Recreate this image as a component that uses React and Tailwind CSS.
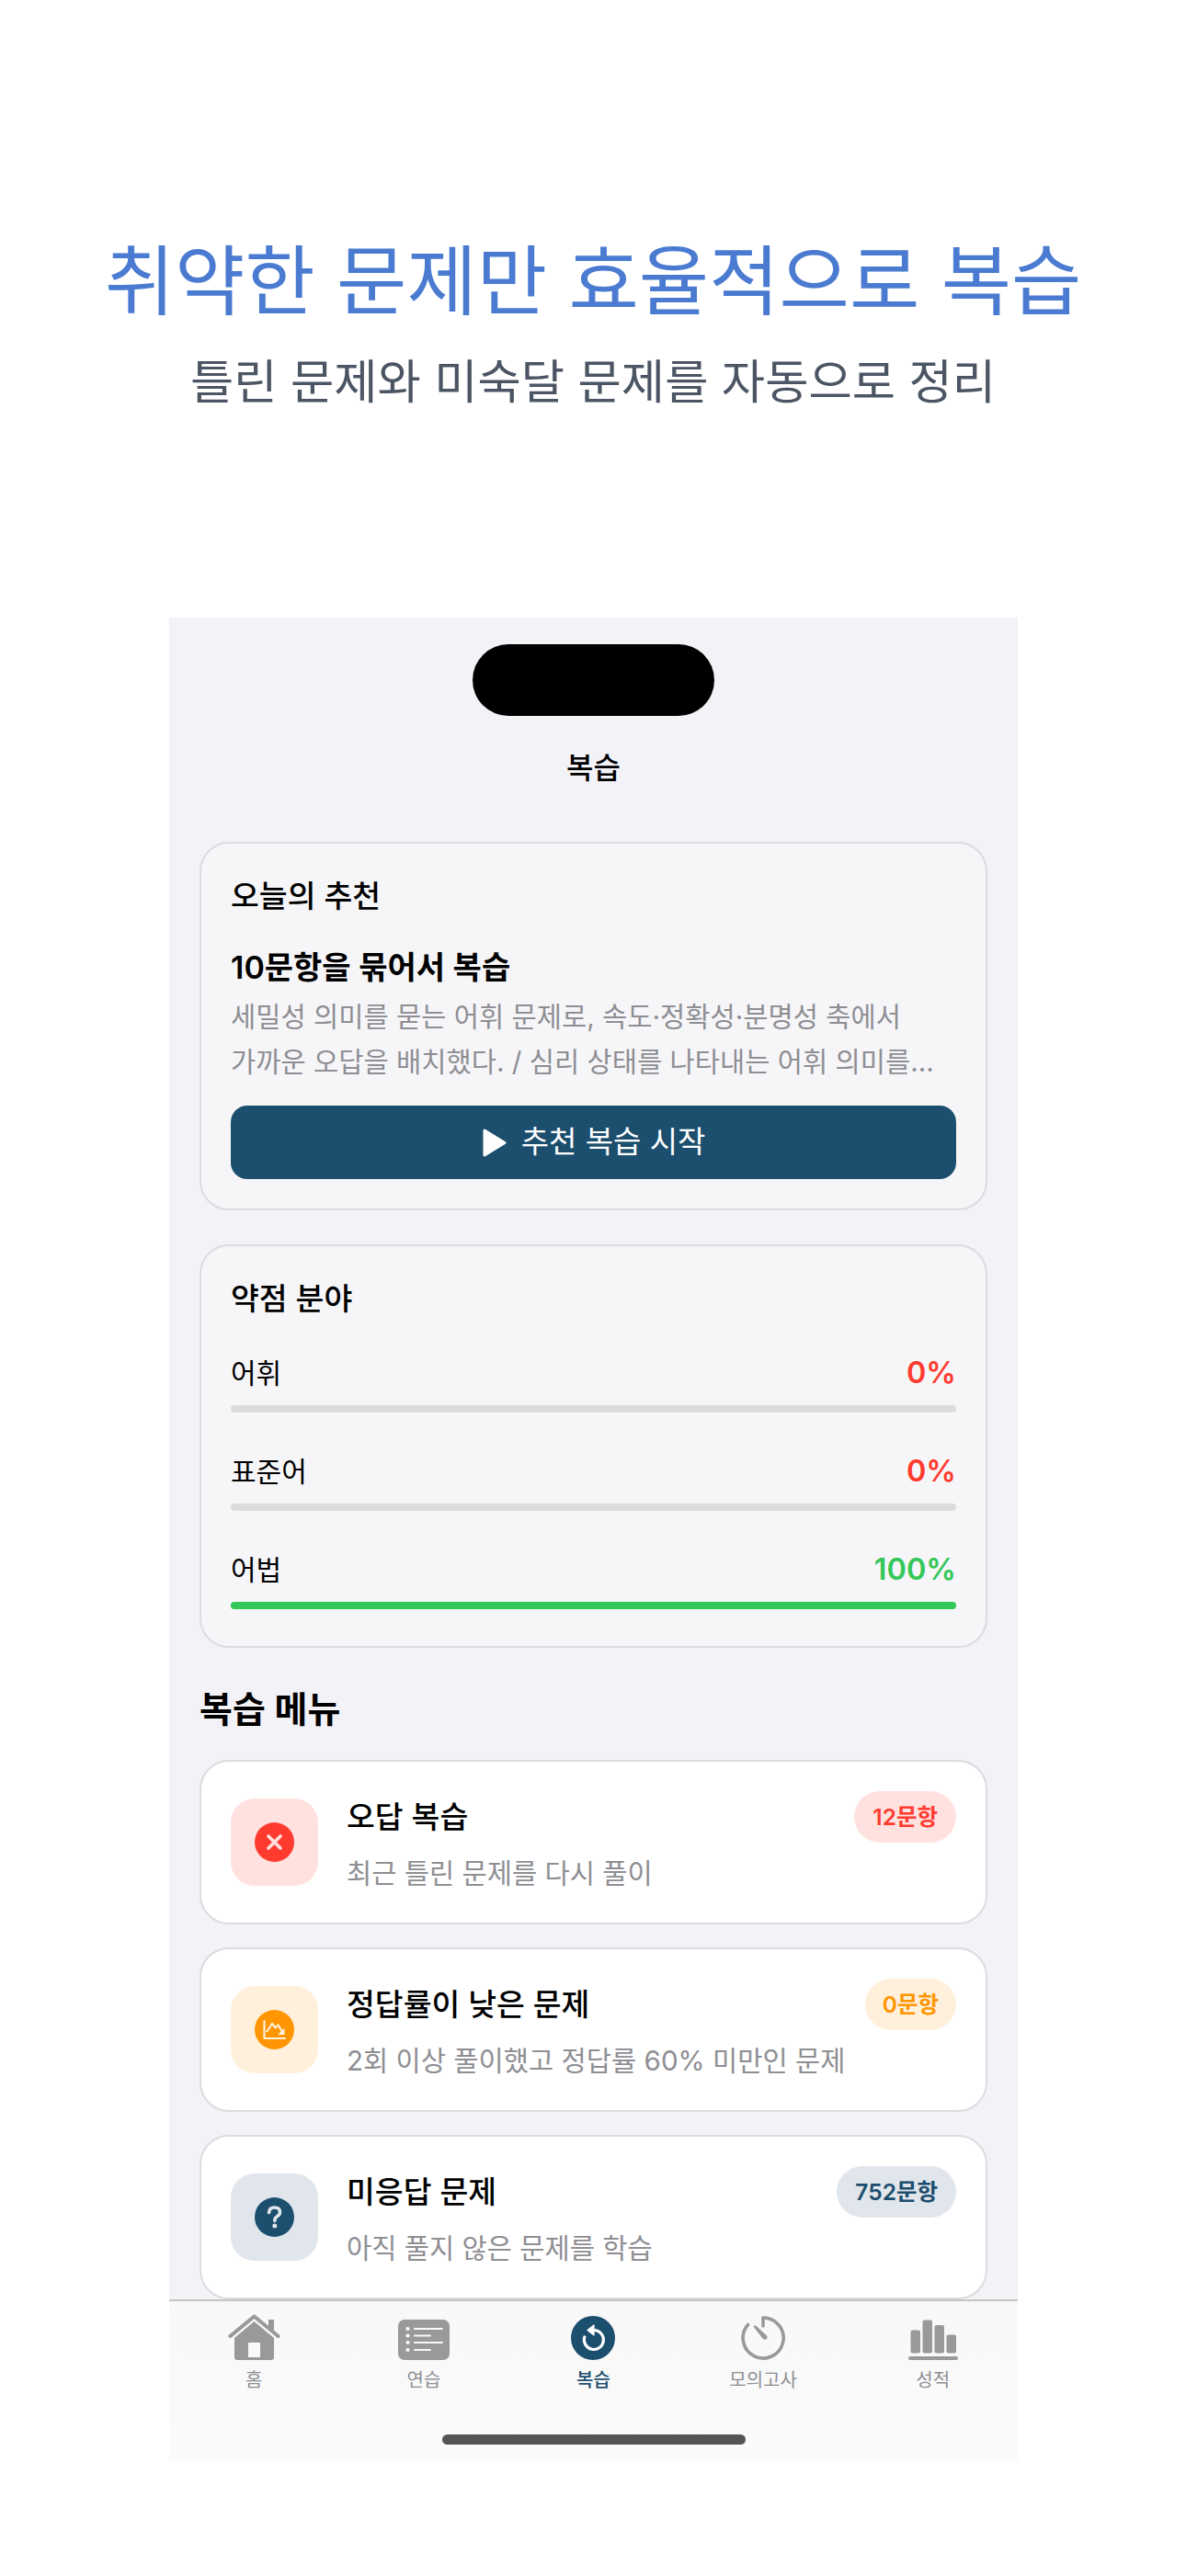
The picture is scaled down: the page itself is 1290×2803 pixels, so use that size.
const FONT = "font-['Inter','Noto_Sans_CJK_KR',sans-serif]"

const GRAY = '#999997'

function HomeIcon() {
  return (
    <svg width="57" height="50" viewBox="0 0 57 50">
      <path d="M2.5 24 L28.5 2.5 L54.5 24" fill="none" stroke={GRAY} strokeWidth="4" strokeLinecap="round" strokeLinejoin="round" />
      <rect x="44" y="6" width="6" height="12" fill={GRAY} />
      <path fillRule="evenodd" fill={GRAY} d="M28.5 8 L50 26 V47 Q50 50 47 50 H10 Q7 50 7 47 V26 Z M22 31 V47 H35 V31 Z" />
    </svg>
  )
}

function ListIcon() {
  return (
    <svg width="56" height="44" viewBox="0 0 56 44">
      <rect width="56" height="44" rx="7" fill={GRAY} />
      {[10, 17.5, 25, 33].map(y => <circle key={y} cx="10.5" cy={y} r="2.1" fill="#f9f9f9" />)}
      <g stroke="#f9f9f9" strokeWidth="2" strokeLinecap="round">
        <path d="M18 10 H48" />
        <path d="M18 17.5 H35" />
        <path d="M18 25 H48" />
        <path d="M18 33 H35" />
      </g>
    </svg>
  )
}

function ReviewIcon() {
  return (
    <svg width="48" height="48" viewBox="0 0 48 48">
      <circle cx="24" cy="24" r="24" fill="#1c4e6e" />
      <path d="M25 15.5 A10.5 10.5 0 1 1 14.8 23" fill="none" stroke="#fff" strokeWidth="3.2" strokeLinecap="round" />
      <path d="M25 10 V21 L18 15.5 Z" fill="#fff" stroke="#fff" strokeWidth="1.2" strokeLinejoin="round" />
    </svg>
  )
}

function TimerIcon() {
  return (
    <svg width="49" height="48" viewBox="0 0 49 48">
      <path d="M24 11 V2 A22 22 0 1 1 7.6 9.5" fill="none" stroke={GRAY} strokeWidth="3.6" strokeLinecap="round" strokeLinejoin="round" />
      <path d="M13.5 11.5 L15.5 10 L28 21.5 Q29.5 24 27.5 25.5 Q25 26.5 23.5 24.5 Z" fill={GRAY} />
    </svg>
  )
}

function StatsIcon() {
  return (
    <svg width="54" height="44" viewBox="0 0 54 44">
      <g fill={GRAY}>
        <rect x="2.5" y="11.5" width="10.5" height="25" rx="2" />
        <rect x="15.5" y="0.5" width="10.5" height="36" rx="2" />
        <rect x="28.5" y="6" width="10.5" height="30.5" rx="2" />
        <rect x="41.5" y="16.5" width="10.5" height="20" rx="2" />
        <rect x="0" y="40" width="54" height="4" rx="2" />
      </g>
    </svg>
  )
}

function XMark() {
  return (
    <svg width="43" height="43" viewBox="0 0 43 43">
      <circle cx="21.5" cy="21.5" r="21.5" fill="#ff3b30" />
      <path d="M15 15 L28 28 M28 15 L15 28" stroke="#ffe2e0" strokeWidth="3.6" strokeLinecap="round" />
    </svg>
  )
}

function DownChart() {
  return (
    <svg width="43" height="43" viewBox="0 0 43 43">
      <circle cx="21.5" cy="21.5" r="21.5" fill="#ff9500" />
      <path d="M10.5 12 V31 H33" fill="none" stroke="#fff0db" strokeWidth="2.2" strokeLinecap="round" strokeLinejoin="round" />
      <path d="M13 24 L19 15 L22.5 19.5 L25.5 16.5 L29.5 23" fill="none" stroke="#fff0db" strokeWidth="2.2" strokeLinejoin="round" />
      <path d="M32.5 19.5 V27 H25 Z" fill="#fff0db" />
    </svg>
  )
}

function QuestionMark() {
  return (
    <svg width="43" height="43" viewBox="0 0 43 43">
      <circle cx="21.5" cy="21.5" r="21.5" fill="#1c4e6e" />
      <path d="M15.5 16.5 Q16 11 21.5 11 Q27.5 11 27.5 16 Q27.5 19 24.5 20.8 Q21.8 22.4 21.8 25.5" fill="none" stroke="#e0e6eb" strokeWidth="3.6" strokeLinecap="round" />
      <circle cx="21.8" cy="31" r="2.5" fill="#e0e6eb" />
    </svg>
  )
}

function PlayMark() {
  return (
    <svg width="27" height="31" viewBox="0 0 27 31">
      <path d="M3 2 L25 15.5 L3 29 Z" fill="#fff" stroke="#fff" strokeWidth="3" strokeLinejoin="round" />
    </svg>
  )
}

const TOPICS = [
  { name: '어휘', pct: 0, color: 'text-[#ff3b30]' },
  { name: '표준어', pct: 0, color: 'text-[#ff3b30]' },
  { name: '어법', pct: 100, color: 'text-[#34c759]' },
]

const MENU = [
  { title: '오답 복습', sub: '최근 틀린 문제를 다시 풀이', count: '12문항', Icon: XMark, box: 'bg-[#ffe2e0]', badge: 'px-[20px] bg-[#ffe2e0] text-[#ff3b30]' },
  { title: '정답률이 낮은 문제', sub: '2회 이상 풀이했고 정답률 60% 미만인 문제', count: '0문항', Icon: DownChart, box: 'bg-[#fff0db]', badge: 'px-[19px] bg-[#fff0db] text-[#ff9500]' },
  { title: '미응답 문제', sub: '아직 풀지 않은 문제를 학습', count: '752문항', Icon: QuestionMark, box: 'bg-[#e0e6eb]', badge: 'px-[20px] bg-[#e0e6eb] text-[#1c4e6e]' },
]

const TABS = [
  { label: '홈', Icon: HomeIcon },
  { label: '연습', Icon: ListIcon },
  { label: '복습', Icon: ReviewIcon, active: true },
  { label: '모의고사', Icon: TimerIcon },
  { label: '성적', Icon: StatsIcon },
]

export default function App() {
  return (
    <div className={`h-[2803px] overflow-hidden bg-white ${FONT}`}>
      <div className="pt-[253px] text-center">
        <h1 className="text-[83px] leading-[106px] font-normal text-[#4a7bd1]">취약한 문제만 효율적으로 복습</h1>
        <p className="mt-[24px] text-[51.4px] leading-[64px] text-[#4b5563]">틀린 문제와 미숙달 문제를 자동으로 정리</p>
      </div>

      <div className="ml-[184px] mt-[225px] flex h-[2006px] w-[923px] flex-col bg-[#f2f2f7]">
        <div className="mx-auto mt-[29px] h-[78px] w-[263px] shrink-0 rounded-full bg-black" />
        <div className="mt-[35px] h-[44px] shrink-0 text-center text-[32px] leading-[44px] font-medium text-black">복습</div>

        <div className="flex-1 overflow-hidden px-[33px] pt-[58px]">
          <section className="h-[401px] rounded-[32px] border-2 border-[#dcdce0] bg-[#f6f6f9] px-[32px] pt-[32px]">
            <h2 className="text-[33.5px] leading-[50px] font-medium text-black">오늘의 추천</h2>
            <h3 className="mt-[28px] text-[34px] leading-[50px] font-semibold text-black">10문항을 묶어서 복습</h3>
            <p className="mt-[4px] text-[29.6px] leading-[49px] text-[#8e8e93]">세밀성 의미를 묻는 어휘 문제로, 속도·정확성·분명성 축에서<br />가까운 오답을 배치했다. / 심리 상태를 나타내는 어휘 의미를...</p>
            <button className="mt-[23px] flex h-[80px] w-full items-center justify-center gap-[16px] rounded-[18px] bg-[#1c4e6e] text-[33px] text-white">
              <PlayMark />
              추천 복습 시작
            </button>
          </section>

          <section className="mt-[37px] h-[439px] rounded-[32px] border-2 border-[#dcdce0] bg-[#f6f6f9] px-[32px] pt-[32px]">
            <h2 className="text-[33.5px] leading-[50px] font-medium text-black">약점 분야</h2>
            <div className="mt-[31px]">
              {TOPICS.map(t => (
                <div key={t.name} className="mb-[39px] last:mb-0">
                  <div className="flex h-[50px] items-center justify-between">
                    <span className="text-[30px] text-black">{t.name}</span>
                    <span className={`text-[32.5px] font-semibold ${t.color}`}>{t.pct}%</span>
                  </div>
                  <div className="mt-[10px] h-[8px] rounded-full bg-[#dcdcdf]">
                    <div className="h-full rounded-full bg-[#34c759]" style={{ width: `${t.pct}%` }} />
                  </div>
                </div>
              ))}
            </div>
          </section>

          <h2 className="mt-[42px] text-[39px] leading-[50px] font-semibold text-black">복습 메뉴</h2>

          <div className="mt-[30px] flex flex-col gap-[25px]">
            {MENU.map(m => (
              <div key={m.title} className="flex h-[179px] items-center rounded-[32px] border-2 border-[#dcdce0] bg-white px-[32px]">
                <div className={`flex h-[95px] w-[95px] shrink-0 items-center justify-center rounded-[26px] ${m.box}`}>
                  <m.Icon />
                </div>
                <div className="ml-[31px] min-w-0 flex-1 pt-[5px]">
                  <div className="text-[33.5px] leading-[50px] font-medium text-black">{m.title}</div>
                  <div className="mt-[11px] text-[29.6px] leading-[50px] text-[#8e8e93]">{m.sub}</div>
                </div>
                <span className={`mb-[55px] flex h-[56px] items-center rounded-full text-[24.5px] font-semibold ${m.badge}`}>{m.count}</span>
              </div>
            ))}
          </div>
        </div>

        <nav className="relative h-[176px] shrink-0 border-t-2 border-[#c4c4c6] bg-gradient-to-b from-[#f8f8f8] to-[#fbfbfb]">
          <div className="grid grid-cols-5">
            {TABS.map(({ label, Icon, active }) => (
              <div key={label} className="flex flex-col items-center">
                <div className="flex h-[64px] items-end">
                  <Icon />
                </div>
                <span className={`mt-[8px] text-[20px] leading-[28px] ${active ? 'font-medium text-[#1c4e6e]' : 'text-[#8e8e93]'}`}>{label}</span>
              </div>
            ))}
          </div>
          <div className="absolute bottom-[18px] left-[297px] h-[11px] w-[330px] rounded-full bg-[#555555]" />
        </nav>
      </div>
    </div>
  )
}
